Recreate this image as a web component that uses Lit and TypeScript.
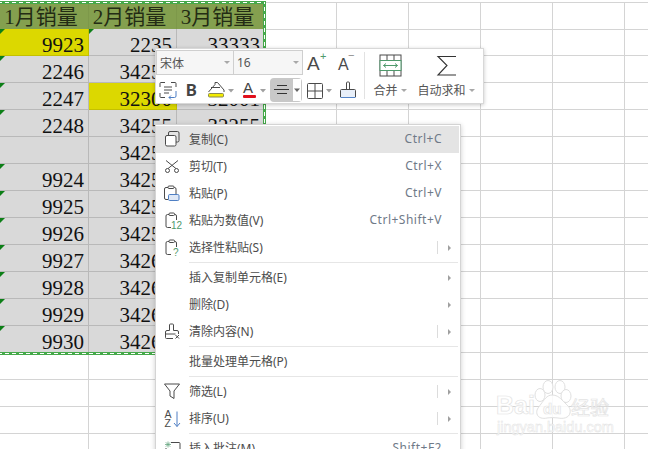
import { LitElement, html, css, svg } from "lit";
import { customElement } from "lit/decorators.js";

type Cell = { t: string; y?: boolean; tri?: boolean };
const col1 = ["9923","2246","2247","2248","","9924","9925","9926","9927","9928","9929","9930"];
const col2 = ["2235","34255","32300","34255","34255","34255","34255","34257","34260","34261","34262","34263"];
const col3 = ["33333","32000","32001","32255","","","","","","","",""];

const clip = svg`<path d="M8 16.500H4.500a1.500 1.500 0 0 1-1.500-1.500V5a1.500 1.500 0 0 1 1.500-1.500h1.500M11.500 3.500H12A1.500 1.500 0 0 1 13.500 5v4" fill="none" stroke="#4a4a4a"/><rect x="6" y="2" width="5.500" height="2.500" rx="1" fill="#fff" stroke="#4a4a4a"/>`;
const icons: Record<string, unknown> = {
  copy: svg`<rect x="2.500" y="5.500" width="10.500" height="10.500" rx="1.500" fill="#fff" stroke="#4a4a4a"/><path d="M5.500 5.500V3A1.500 1.500 0 0 1 7 1.500h7.500A1.500 1.500 0 0 1 16 3v7.500A1.500 1.500 0 0 1 14.500 12H13" fill="none" stroke="#4a4a4a"/>`,
  cut: svg`<path d="M3 3.500l10.500 8.500M15 3.500L4.500 12" fill="none" stroke="#4a4a4a"/><circle cx="4.500" cy="13.500" r="2" fill="#fff" stroke="#4a4a4a"/><circle cx="13.500" cy="13.500" r="2" fill="#fff" stroke="#4a4a4a"/>`,
  paste: svg`<path d="M5 15.500H3a1.500 1.500 0 0 1-1.500-1.500V5A1.500 1.500 0 0 1 3 3.500h2M11 3.500h.5A1.500 1.500 0 0 1 13 5v5" fill="none" stroke="#4a4a4a"/><rect x="5" y="2" width="6" height="2.500" rx="1" fill="#fff" stroke="#4a4a4a"/><rect x="5.500" y="10.500" width="10.500" height="6" rx="1.200" fill="#dfe8f6" stroke="#4f7fc4"/>`,
  value: svg`${clip}<text class="mini green" x="8" y="17.500">12</text>`,
  special: svg`${clip}<text class="mini green" x="10" y="18">?</text>`,
  clear: svg`<path d="M6.500 8.500V3a1 1 0 0 1 1-1h2a1 1 0 0 1 1 1v5.500H14a1.500 1.500 0 0 1 1.500 1.500v2M2.500 12v-2A1.500 1.500 0 0 1 4 8.500h2.500M2.500 12h10M2.500 12v3.500a1 1 0 0 0 1 1H10" fill="none" stroke="#4a4a4a"/><path d="M12.500 13l3.500 3.500M16 13l-3.500 3.500" fill="none" stroke="#4a4a4a"/>`,
  filter: svg`<path d="M1.500 2h15l-5.500 7v7.500l-4-2.500V9z" fill="none" stroke="#4a4a4a"/>`,
  sort: svg`<text class="az" x="1.500" y="9">A</text><text class="az" x="1.500" y="18">Z</text><path d="M14 2.500v15M11 14l3 3.500 3-3.500" fill="none" stroke="#4f7fc4"/>`,
  note: svg`<path d="M8 3.500h8a1 1 0 0 1 1 1V18H3V9" fill="none" stroke="#4a4a4a"/><path d="M5 2.500v6M2 5.500h6M2.800 3.300l4.400 4.400M7.200 3.300L2.800 7.700" fill="none" stroke="#6aa884" stroke-width=".8"/>`,
};

type Item = { sep?: boolean; icon?: string; label?: string; key?: string; arrow?: boolean; bar?: boolean; active?: boolean };
const menu: Item[] = [
  { icon: "copy", label: "复制(C)", key: "Ctrl+C", active: true },
  { icon: "cut", label: "剪切(T)", key: "Ctrl+X" },
  { icon: "paste", label: "粘贴(P)", key: "Ctrl+V" },
  { icon: "value", label: "粘贴为数值(V)", key: "Ctrl+Shift+V" },
  { icon: "special", label: "选择性粘贴(S)", arrow: true, bar: true },
  { sep: true },
  { label: "插入复制单元格(E)", arrow: true },
  { label: "删除(D)", arrow: true },
  { icon: "clear", label: "清除内容(N)", arrow: true, bar: true },
  { sep: true },
  { label: "批量处理单元格(P)" },
  { sep: true },
  { icon: "filter", label: "筛选(L)", arrow: true, bar: true },
  { icon: "sort", label: "排序(U)", arrow: true, bar: true },
  { sep: true },
  { icon: "note", label: "插入批注(M)", key: "Shift+F2" },
];

const caret = (x: number) => svg`<path d="M${x} 11h6l-3 3.500z" fill="#a0a0a0"/>`;

@customElement("app-root")
export class AppRoot extends LitElement {
  static styles = css`
    :host { display: block; width: 648px; height: 449px; position: relative; overflow: hidden; background: #fff; font-family: "Noto Sans", "Noto Sans CJK SC", "Liberation Sans", sans-serif; }
    .sheet { display: grid; grid-template-columns: 89px 88px 88px repeat(6, 72px); grid-auto-rows: 27px; padding-top: 2px; }
    .cell { box-sizing: border-box; border-right: 1px solid #d4d4d4; border-bottom: 1px solid #d4d4d4; position: relative; display: flex; align-items: center; justify-content: flex-end; padding: 6px 4px 0 0; font: 21px "Liberation Serif", serif; color: #111; white-space: nowrap; overflow: hidden; }
    .sheet > .h { height: 28px; background: #84a04f; border-color: #7d984a; justify-content: center; padding: 0 6px 2px 0; font: 21px "Liberation Serif", "Noto Sans CJK SC", sans-serif; color: #232c14; }
    .sheet > .top { height: 28px; border-top: 1px solid #d4d4d4; }
    .sel { background: #d9d9d9; border-color: #b9b9b9; }
    .yel { background: #dcd800; border-color: #c4c000; }
    .tri::before { content: ""; position: absolute; left: 0; top: 0; border-top: 5px solid #0d7f17; border-right: 5px solid transparent; }
    .marquee { position: absolute; left: -3px; top: 1px; width: 263px; height: 348px; border: 3px solid #45a94a; pointer-events: none; }
    .marquee::after {
      content: ""; position: absolute; inset: -2px;
      background:
        repeating-linear-gradient(90deg, #fff 0 4px, transparent 4px 7px) left top / 100% 1px no-repeat,
        repeating-linear-gradient(90deg, #fff 0 4px, transparent 4px 7px) left bottom / 100% 1px no-repeat,
        repeating-linear-gradient(0deg, #fff 0 4px, transparent 4px 7px) right top / 1px 100% no-repeat;
    }

    .toolbar { position: absolute; left: 155px; top: 48px; width: 329px; height: 56px; box-sizing: border-box; display: flex; background: #fff; border: 1px solid #d8d8d8; box-shadow: 0 1px 4px rgba(0,0,0,.22); }
    .tb-main { width: 208px; display: flex; flex-direction: column; gap: 2px; padding-top: 1px; }
    .tb-row { display: flex; align-items: flex-start; }
    .fontbox { box-sizing: border-box; display: flex; width: 147px; height: 25px; border: 1px solid #cfcfcf; background: #f6f6f6; font-size: 12px; color: #555; }
    .fname { width: 77px; display: flex; align-items: center; justify-content: space-between; padding: 0 3px; box-sizing: border-box; border-right: 1px solid #cfcfcf; }
    .fsize { flex: 1; display: flex; align-items: center; justify-content: space-between; padding: 0 3px; }
    .tb-main svg { display: block; flex: none; }
    .caret { display: block; flex: none; width: 0; height: 0; border-left: 3px solid transparent; border-right: 3px solid transparent; border-top: 3.500px solid #a8a8a8; }
    .aligner { width: 32px; height: 24px; margin: 0 2px; background: #c8c8c8; border-radius: 4px; display: flex; flex: none; }
    .stripe { background: #fff; margin-top: 1px; }
    .bold { font: bold 17px "Roboto", "Liberation Sans", sans-serif; fill: #444; }
    .bigA { font: 19px "Liberation Sans", sans-serif; fill: #4a4a4a; }
    .midA { font: 16px "Liberation Sans", sans-serif; fill: #4a4a4a; }
    .smallA { font: 15px "Liberation Sans", sans-serif; fill: #444; }
    .green { fill: #4f9a6c; }
    .plus { font: 11px "Liberation Sans", sans-serif; }
    .minus { font: 11px "Liberation Sans", sans-serif; fill: #888; }
    .divider { width: 1px; margin: 3px 0 4px; background: #e2e2e2; flex: none; }
    .big { display: flex; flex-direction: column; align-items: center; font-size: 12px; color: #555; }
    .big svg { display: block; margin-top: 5px; }
    .big-label { display: flex; align-items: center; gap: 3px; margin-top: 4px; height: 18px; white-space: nowrap; }
    .merge { width: 50px; }
    .sum { width: 62px; }

    .menu { position: absolute; left: 155px; top: 124px; width: 306px; box-sizing: border-box; background: #fff; border: 1px solid #d4d4d4; padding: 1px 0 0; box-shadow: 0 1px 5px rgba(0,0,0,.2); font-size: 12px; color: #4c4c4c; }
    .item { height: 27px; display: flex; align-items: center; margin: 0 1px 0 0; padding-left: 7px; }
    .item.active { background: #e4e4e4; }
    .ico { width: 20px; height: 20px; flex: none; margin-right: 6px; }
    .mini { font: 10px "Liberation Sans", sans-serif; }
    .az { font: 10.500px "Liberation Sans", sans-serif; fill: #4a4a4a; }
    .label { flex: 1; white-space: nowrap; padding-bottom: 2px; }
    .key { padding: 0 17px 2px 0; color: #6f7a88; white-space: nowrap; letter-spacing: .5px; }
    .bar { width: 1px; height: 13px; background: #dcdcdc; }
    .arrowbox { width: 21px; flex: none; display: flex; justify-content: flex-start; padding-left: 10px; box-sizing: border-box; }
    .arrow { width: 0; height: 0; border-top: 3px solid transparent; border-bottom: 3px solid transparent; border-left: 3.500px solid #a0a0a0; }
    .sep { height: 3px; display: flex; align-items: center; padding: 0 2px 0 33px; }
    .sep::after { content: ""; flex: 1; height: 1px; background: #e6e6e6; }

    .mark { position: absolute; left: 490px; top: 376px; pointer-events: none; }
    .wm { fill: rgba(255,255,255,.85); stroke: #e3e3e3; stroke-width: .7; font-family: "Liberation Sans", sans-serif; }
    .wm1 { font-size: 25px; font-weight: bold; }
    .wm2 { font-size: 15px; font-weight: bold; }
    .wm3 { font-size: 19px; font-family: "Noto Sans CJK SC", sans-serif; }
    .wm4 { font-size: 14.500px; stroke-width: .5; }
    .paw { fill: rgba(255,255,255,.85); stroke: #e0e0e0; stroke-width: 1; }
  `;

  private cells() {
    const out: unknown[] = [];
    ["1月销量", "2月销量", "3月销量"].forEach((h) => out.push(html`<div class="cell h">${h}</div>`));
    for (let i = 0; i < 6; i++) out.push(html`<div class="cell top"></div>`);
    for (let r = 0; r < 16; r++) {
      if (r < 12) {
        const a: Cell = { t: col1[r], y: r === 0, tri: r !== 4 };
        const b: Cell = { t: col2[r], y: r === 2, tri: r === 0 };
        const c: Cell = { t: col3[r] };
        [a, b, c].forEach((k) => out.push(html`<div class="cell sel ${k.y ? "yel" : ""} ${k.tri ? "tri" : ""}">${k.t}</div>`));
      } else {
        for (let i = 0; i < 3; i++) out.push(html`<div class="cell"></div>`);
      }
      for (let i = 0; i < 6; i++) out.push(html`<div class="cell"></div>`);
    }
    return out;
  }

  private toolbar() {
    return html`<div class="toolbar">
      <div class="tb-main">
        <div class="tb-row">
          <div class="fontbox">
            <div class="fname"><span>宋体</span><i class="caret"></i></div>
            <div class="fsize"><span>16</span><i class="caret"></i></div>
          </div>
          <svg width="30" height="26"><text class="bigA" x="4" y="20">A</text><text class="plus green" x="17" y="10">+</text></svg>
          <svg width="28" height="26"><text class="midA" x="5" y="20">A</text><text class="minus" x="15" y="9">−</text></svg>
        </div>
        <div class="tb-row">
          <svg width="24" height="24">
            <path d="M4 9V5.500a1 1 0 0 1 1-1h4M15 4.500h4a1 1 0 0 1 1 1V9M4 15v3.500a1 1 0 0 0 1 1h4M8 9h8M8 12h8M8 15h5" fill="none" stroke="#4a4a4a"/>
            <path d="M20 13v5a1.500 1.500 0 0 1-1.500 1.500H13M15 17.500l-2 2 2 2" fill="none" stroke="#4f7fc4"/>
          </svg>
          <svg width="24" height="24"><text class="bold" x="6" y="18">B</text></svg>
          <svg width="34" height="24">
            <path d="M4.500 14L11 6.500V4.500h2.500L20 12v2" fill="none" stroke="#4a4a4a"/>
            <path d="M7 9.500h9" fill="none" stroke="#4a4a4a"/>
            <rect x="4.500" y="15.500" width="15" height="3.500" rx="1" fill="#f4ec00" stroke="#8a8a50"/>
            ${caret(24)}
          </svg>
          <svg width="30" height="24">
            <text class="smallA" x="5" y="15">A</text>
            <rect x="5" y="17" width="13" height="3" rx="1" fill="#e0101c"/>
            ${caret(22)}
          </svg>
          <div class="aligner">
            <svg width="23" height="24"><path d="M7 7.500h10M4 11.500h15M7 15.500h10" fill="none" stroke="#333"/></svg>
            <svg class="stripe" width="8" height="22"><path d="M1 9.500h6l-3 3.500z" fill="#666"/></svg>
          </div>
          <svg width="32" height="24">
            <rect x="3.500" y="5.500" width="15" height="15" rx="1" fill="none" stroke="#4a4a4a"/>
            <path d="M11 5.500v15M3.500 13h15" fill="none" stroke="#4a4a4a"/>
            ${caret(22)}
          </svg>
          <svg width="24" height="24">
            <path d="M10.500 11V5a1 1 0 0 1 1-1h1a1 1 0 0 1 1 1v6" fill="none" stroke="#4a4a4a"/>
            <path d="M4.500 19v-6.500a1 1 0 0 1 1-1h13a1 1 0 0 1 1 1V19" fill="#e8eff9" stroke="#4a4a4a"/>
            <path d="M4.500 19.500h15" fill="none" stroke="#5585c8"/>
          </svg>
        </div>
      </div>
      <div class="divider"></div>
      <div class="big merge">
        <svg width="23" height="23">
          <rect x="1" y="1" width="21" height="21" fill="#fff" stroke="#4a4a4a"/>
          <path d="M8 1v5M15 1v5M8 17v5M15 17v5" fill="none" stroke="#4a4a4a"/>
          <rect x="1" y="6.500" width="21" height="10" fill="#fff" stroke="#4f9a6c"/>
          <path d="M4.500 11.500h14M7 9.500l-2.500 2 2.500 2M16 9.500l2.500 2-2.500 2" fill="none" stroke="#4f9a6c"/>
        </svg>
        <div class="big-label"><span>合并</span><i class="caret"></i></div>
      </div>
      <div class="big sum">
        <svg width="23" height="23"><path d="M21 2.500H3l9 9-9 9.500h18" fill="none" stroke="#333" stroke-width="1.100"/></svg>
        <div class="big-label"><span>自动求和</span><i class="caret"></i></div>
      </div>
    </div>`;
  }

  private menu() {
    return html`<div class="menu">
      ${menu.map((m) =>
        m.sep
          ? html`<div class="sep"></div>`
          : html`<div class="item ${m.active ? "active" : ""}">
              <svg class="ico" viewBox="0 0 20 20">${m.icon ? icons[m.icon] : ""}</svg>
              <span class="label">${m.label}</span>
              ${m.key ? html`<span class="key">${m.key}</span>` : ""}
              ${m.bar ? html`<i class="bar"></i>` : ""}
              ${m.arrow ? html`<span class="arrowbox"><i class="arrow"></i></span>` : ""}
            </div>`
      )}
    </div>`;
  }

  render() {
    return html`
      <div class="sheet">${this.cells()}</div>
      <div class="marquee"></div>
      <svg class="mark" width="130" height="62" viewBox="0 0 130 62">
        <text class="wm wm1" x="6" y="38">Bai</text>
        <ellipse class="paw" cx="50" cy="19" rx="5" ry="6.500"/>
        <ellipse class="paw" cx="58" cy="11" rx="5" ry="6.500"/>
        <ellipse class="paw" cx="70" cy="11" rx="5" ry="6.500"/>
        <ellipse class="paw" cx="76" cy="20" rx="5" ry="6.500"/>
        <path class="paw" d="M62 19c-5 0-8 5-11 9-3 4-5 6-4 10s6 5 10 4c4-.5 7-.5 11 0 5 1 11 0 12-5s-2-7-5-10c-4-4-7-8-13-8z"/>
        <text class="wm wm2" x="53" y="38">du</text>
        <text class="wm wm3" x="81" y="39">经验</text>
        <text class="wm wm4" x="7" y="56">jingyan.baidu.com</text>
      </svg>
      ${this.toolbar()}
      ${this.menu()}
    `;
  }
}
